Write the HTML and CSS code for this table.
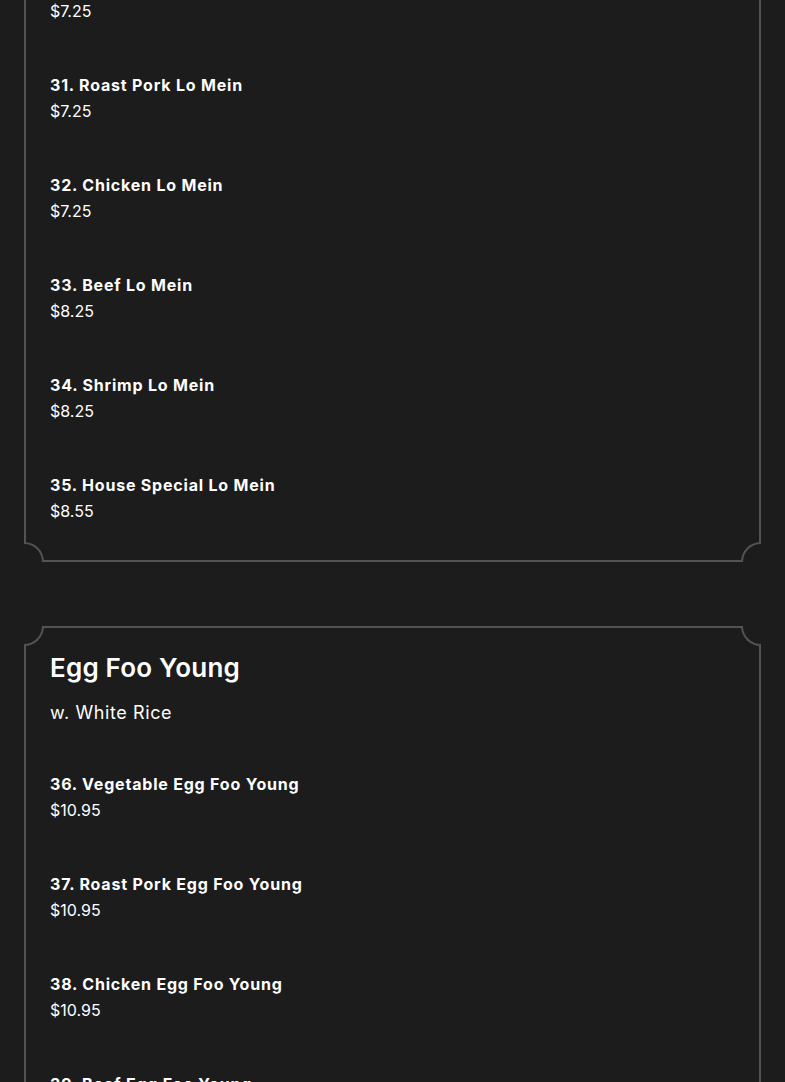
FILE: index.html
```html
<!DOCTYPE html>
<html lang="en">
<head>
<meta charset="utf-8">
<title>Menu</title>
<link rel="stylesheet" href="styles.css">
</head>
<body>
<main class="menu">
  <section class="card card-first">
    <span class="corner tl"></span><span class="corner tr"></span><span class="corner bl"></span><span class="corner br"></span>
    <ul class="items">
      <li class="item"><div class="name">30. Pork Lo Mein</div><div class="price">$7.25</div></li>
      <li class="item"><div class="name">31. Roast Pork Lo Mein</div><div class="price">$7.25</div></li>
      <li class="item"><div class="name">32. Chicken Lo Mein</div><div class="price">$7.25</div></li>
      <li class="item"><div class="name">33. Beef Lo Mein</div><div class="price">$8.25</div></li>
      <li class="item"><div class="name">34. Shrimp Lo Mein</div><div class="price">$8.25</div></li>
      <li class="item"><div class="name">35. House Special Lo Mein</div><div class="price">$8.55</div></li>
    </ul>
  </section>
  <section class="card">
    <span class="corner tl"></span><span class="corner tr"></span><span class="corner bl"></span><span class="corner br"></span>
    <h2 class="title">Egg Foo Young</h2>
    <p class="subtitle">w. White Rice</p>
    <ul class="items">
      <li class="item"><div class="name">36. Vegetable Egg Foo Young</div><div class="price">$10.95</div></li>
      <li class="item"><div class="name">37. Roast Pork Egg Foo Young</div><div class="price">$10.95</div></li>
      <li class="item"><div class="name">38. Chicken Egg Foo Young</div><div class="price">$10.95</div></li>
      <li class="item"><div class="name">39. Beef Egg Foo Young</div><div class="price">$10.95</div></li>
      <li class="item"><div class="name">40. Shrimp Egg Foo Young</div><div class="price">$11.95</div></li>
    </ul>
  </section>
</main>
</body>
</html>
```

FILE: styles.css
```css
html, body {
  margin: 0;
  padding: 0;
  background: #1c1c1c;
  color: #ffffff;
  font-family: "Inter", "Open Sans", sans-serif;
}
.menu {
  display: flex;
  flex-direction: column;
  gap: 64px;
  padding: 0 24px;
  margin-top: -70px;
}
.card {
  position: relative;
  border: 2px solid #535353;
  padding: 24px 24px 36px;
}
.card-first {
  padding-top: 40px;
}
.corner {
  position: absolute;
  width: 20px;
  height: 20px;
  background: #1c1c1c;
  box-sizing: border-box;
  border: 0 solid #535353;
}
.corner.tl {
  top: -2px; left: -2px;
  border-right-width: 2px; border-bottom-width: 2px;
  border-bottom-right-radius: 100%;
}
.corner.tr {
  top: -2px; right: -2px;
  border-left-width: 2px; border-bottom-width: 2px;
  border-bottom-left-radius: 100%;
}
.corner.bl {
  bottom: -2px; left: -2px;
  border-right-width: 2px; border-top-width: 2px;
  border-top-right-radius: 100%;
}
.corner.br {
  bottom: -2px; right: -2px;
  border-left-width: 2px; border-top-width: 2px;
  border-top-left-radius: 100%;
}
.title {
  margin: 0;
  font-size: 26px;
  line-height: 32px;
  font-weight: 600;
  letter-spacing: 0.2px;
}
.subtitle {
  margin: 15px 0 0;
  font-size: 18px;
  line-height: 28px;
  font-weight: 400;
  letter-spacing: 0.6px;
}
.items {
  list-style: none;
  margin: 0;
  padding: 0;
  display: flex;
  flex-direction: column;
  gap: 48px;
}
.subtitle + .items {
  margin-top: 44px;
}
.name {
  font-size: 16px;
  line-height: 26px;
  font-weight: 700;
  letter-spacing: 0.8px;
}
.price {
  font-size: 16px;
  line-height: 26px;
  font-weight: 400;
}
```
